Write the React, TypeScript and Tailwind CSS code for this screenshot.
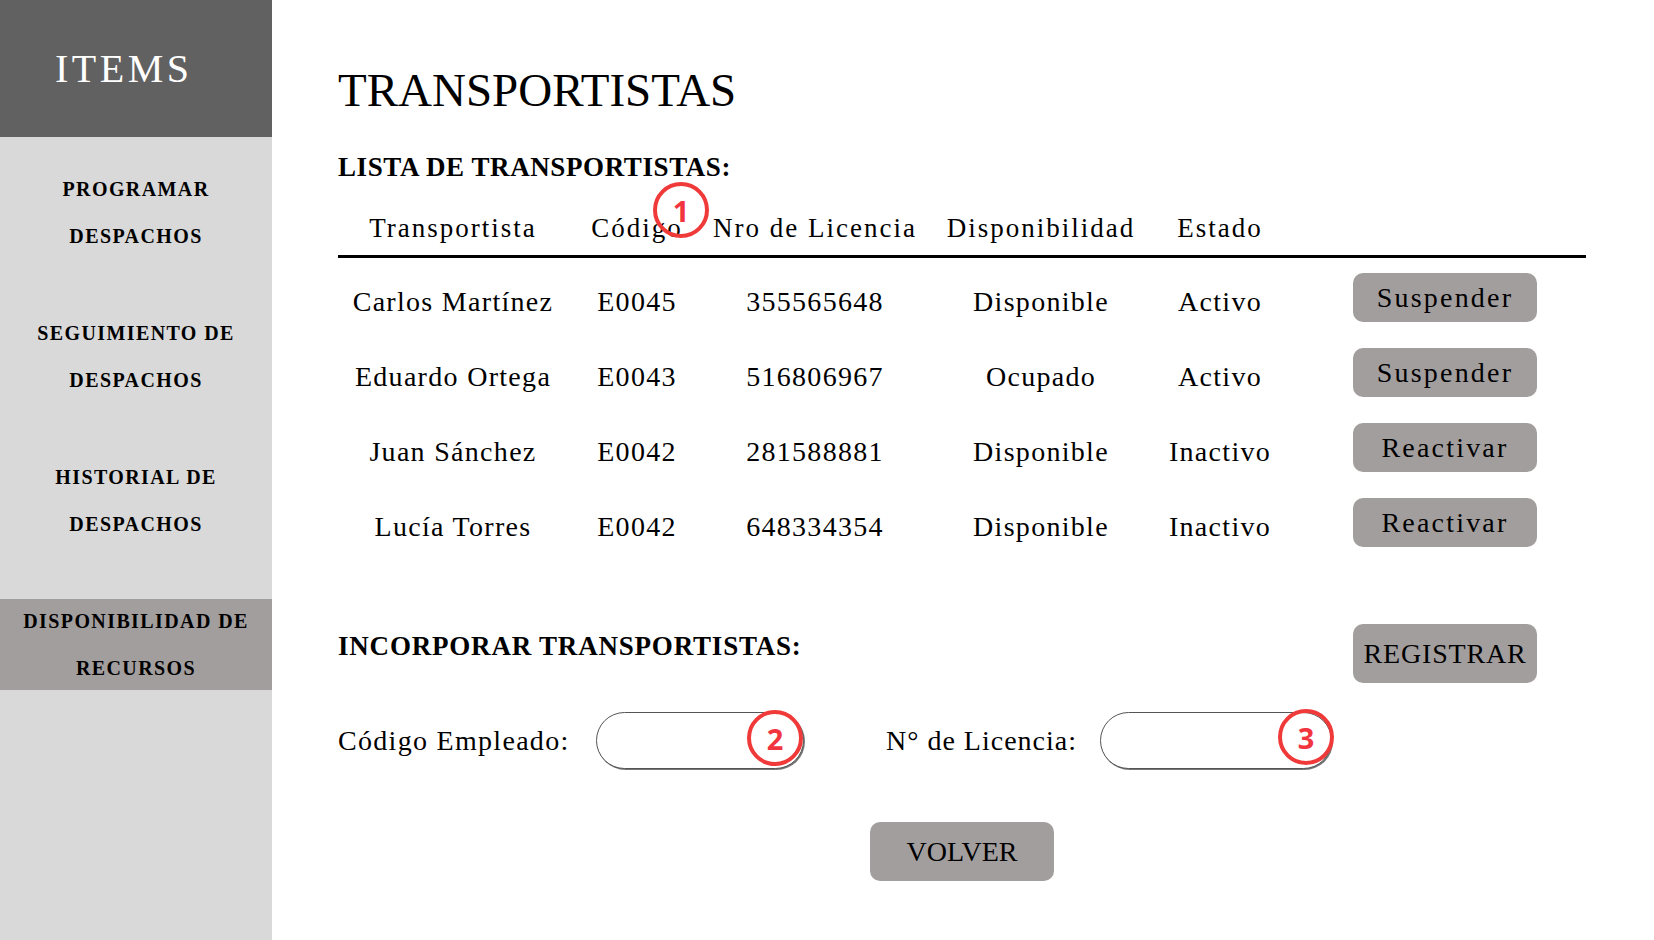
import React from "react";

const rows = [
  { nombre: "Carlos Martínez", codigo: "E0045", licencia: "355565648", disp: "Disponible", estado: "Activo", accion: "Suspender" },
  { nombre: "Eduardo Ortega", codigo: "E0043", licencia: "516806967", disp: "Ocupado", estado: "Activo", accion: "Suspender" },
  { nombre: "Juan Sánchez", codigo: "E0042", licencia: "281588881", disp: "Disponible", estado: "Inactivo", accion: "Reactivar" },
  { nombre: "Lucía Torres", codigo: "E0042", licencia: "648334354", disp: "Disponible", estado: "Inactivo", accion: "Reactivar" },
];

const navItems = [
  { label: ["PROGRAMAR", "DESPACHOS"], active: false },
  { label: ["SEGUIMIENTO DE", "DESPACHOS"], active: false },
  { label: ["HISTORIAL DE", "DESPACHOS"], active: false },
  { label: ["DISPONIBILIDAD DE", "RECURSOS"], active: true },
];

function Marker({ n, className }: { n: string; className: string }) {
  return (
    <div
      className={`absolute w-[56px] h-[56px] rounded-full border-4 border-[#f03a3a] flex items-center justify-center text-[#f2343f] font-bold text-[29px] leading-none font-['Open_Sans',sans-serif] ${className}`}
    >
      {n}
    </div>
  );
}

export default function App() {
  return (
    <div className="flex w-full h-[940px] bg-white text-black font-['Liberation_Serif','Times_New_Roman',serif]">
      {/* sidebar */}
      <aside className="w-[272px] shrink-0 bg-[#d9d9d9] flex flex-col">
        <div className="h-[137px] bg-[#616161] flex items-center pl-[55px]">
          <span className="text-white text-[40px] tracking-[3.5px] leading-none">ITEMS</span>
        </div>
        <nav className="flex flex-col gap-[53px] pt-[30px]">
          {navItems.map((item) => (
            <div
              key={item.label[0]}
              className={`h-[91px] flex flex-col items-center justify-center font-bold text-[20px] tracking-[1.4px] leading-[47px] ${
                item.active ? "bg-[#a39e9e]" : ""
              }`}
            >
              {item.label.map((l) => (
                <span key={l}>{l}</span>
              ))}
            </div>
          ))}
        </nav>
      </aside>

      {/* main */}
      <main className="relative flex-1 pl-[66px] pt-[67px]">
        <div className="w-[1248px] flex flex-col">
          <h1 className="text-[47px] leading-none">TRANSPORTISTAS</h1>
          <h2 className="mt-[40px] text-[27px] font-bold tracking-[0.6px] leading-none">LISTA DE TRANSPORTISTAS:</h2>

          <div className="grid grid-cols-[230px_138px_218px_234px_124px_1fr] pt-[34px] pb-[13px] border-b-[3px] border-black text-[27px] tracking-[2px] leading-none text-center">
            <span>Transportista</span>
            <span>Código</span>
            <span>Nro de Licencia</span>
            <span>Disponibilidad</span>
            <span>Estado</span>
            <span></span>
          </div>

          <div className="pt-[2px] flex flex-col">
            {rows.map((r) => (
              <div
                key={r.nombre}
                className="grid grid-cols-[230px_138px_218px_234px_124px_1fr] h-[75px] items-center text-[28px] tracking-[1.3px] leading-none text-center"
              >
                <span className="pt-[9px]">{r.nombre}</span>
                <span className="pt-[9px]">{r.codigo}</span>
                <span className="pt-[9px]">{r.licencia}</span>
                <span className="pt-[9px]">{r.disp}</span>
                <span className="pt-[9px]">{r.estado}</span>
                <div className="flex pl-[71px]">
                  <button className="w-[184px] h-[49px] rounded-[10px] bg-[#a39e9e] text-[28px] tracking-[2.2px] leading-none">
                    {r.accion}
                  </button>
                </div>
              </div>
            ))}
          </div>

          <div className="mt-[64px] flex items-start justify-between pr-[49px]">
            <h2 className="mt-[9px] text-[27px] font-bold tracking-[0.8px] leading-none">INCORPORAR TRANSPORTISTAS:</h2>
            <button className="w-[184px] h-[59px] rounded-[10px] bg-[#a39e9e] text-[28px] tracking-[0.8px] leading-none">
              REGISTRAR
            </button>
          </div>

          <div className="mt-[29px] flex items-center">
            <label className="w-[258px] text-[28px] tracking-[1.3px] leading-none">Código Empleado:</label>
            <div className="relative">
              <input className="w-[208px] h-[57px] rounded-full border border-[#555] shadow-[1px_1px_0_#777] bg-white outline-none" />
              <Marker n="2" className="left-[151px] top-[-2px]" />
            </div>
            <label className="ml-[82px] w-[214px] text-[28px] tracking-[1px] leading-none">N° de Licencia:</label>
            <div className="relative">
              <input className="w-[232px] h-[57px] rounded-full border border-[#555] shadow-[1px_1px_0_#777] bg-white outline-none" />
              <Marker n="3" className="left-[178px] top-[-3px]" />
            </div>
          </div>

          <div className="mt-[53px] flex justify-center">
            <button className="w-[184px] h-[59px] rounded-[10px] bg-[#a39e9e] text-[28px] leading-none">VOLVER</button>
          </div>
        </div>

        <Marker n="1" className="left-[381px] top-[182px]" />
      </main>
    </div>
  );
}
